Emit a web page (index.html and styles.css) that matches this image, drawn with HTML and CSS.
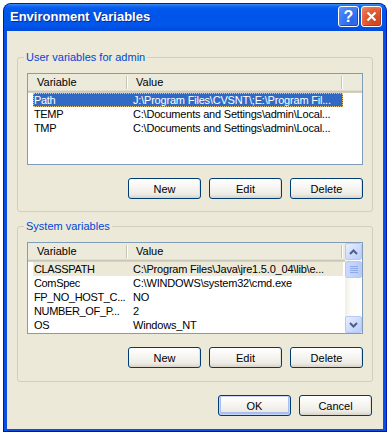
FILE: index.html
```html
<!DOCTYPE html>
<html lang="en">
<head>
    <meta charset="UTF-8">
    <title>Environment Variables</title>
    <link rel="stylesheet" href="styles.css">
</head>
<body>
<div class="window">
    <div class="titlebar">
        <span class="title">Environment Variables</span>
        <span class="tb-btn tb-help">?</span>
        <span class="tb-btn tb-close">
            <svg width="13" height="13" viewBox="0 0 13 13"><path d="M2.5 2.5 L10.5 10.5 M10.5 2.5 L2.5 10.5" stroke="#fff" stroke-width="2.2"/></svg>
        </span>
    </div>

    <div class="dialog">
        <fieldset class="group">
            <legend>User variables for admin</legend>
            <div class="list">
                <div class="list-main">
                    <div class="list-head">
                        <span class="hcol hcol-var"><span class="htext">Variable</span><i class="hdiv"></i></span>
                        <span class="hcol hcol-val"><span class="htext">Value</span><i class="hdiv"></i></span>
                    </div>
                    <div class="row row-selected"><span class="cell cell-var">Path</span><span class="cell cell-val">J:\Program Files\CVSNT\;E:\Program Fil...</span></div>
                    <div class="row"><span class="cell cell-var">TEMP</span><span class="cell cell-val">C:\Documents and Settings\admin\Local...</span></div>
                    <div class="row"><span class="cell cell-var">TMP</span><span class="cell cell-val">C:\Documents and Settings\admin\Local...</span></div>
                </div>
            </div>
            <div class="btn-row">
                <button class="btn">New</button>
                <button class="btn">Edit</button>
                <button class="btn">Delete</button>
            </div>
        </fieldset>

        <fieldset class="group group-system">
            <legend>System variables</legend>
            <div class="list">
                <div class="list-main">
                    <div class="list-head">
                        <span class="hcol hcol-var"><span class="htext">Variable</span><i class="hdiv"></i></span>
                        <span class="hcol hcol-val"><span class="htext">Value</span><i class="hdiv"></i></span>
                    </div>
                    <div class="row row-inactive"><span class="cell cell-var">CLASSPATH</span><span class="cell cell-val">C:\Program Files\Java\jre1.5.0_04\lib\e...</span></div>
                    <div class="row"><span class="cell cell-var">ComSpec</span><span class="cell cell-val">C:\WINDOWS\system32\cmd.exe</span></div>
                    <div class="row"><span class="cell cell-var">FP_NO_HOST_C...</span><span class="cell cell-val">NO</span></div>
                    <div class="row"><span class="cell cell-var">NUMBER_OF_P...</span><span class="cell cell-val">2</span></div>
                    <div class="row"><span class="cell cell-var">OS</span><span class="cell cell-val">Windows_NT</span></div>
                </div>
                <div class="scroll">
                    <span class="sb-btn">
                        <svg width="9" height="6" viewBox="0 0 9 6"><path d="M1 5 L4.5 1.5 L8 5" fill="none" stroke="#4d6185" stroke-width="2"/></svg>
                    </span>
                    <span class="sb-btn sb-thumb">
                        <svg width="8" height="7" viewBox="0 0 8 7"><path d="M0 0.5 H8 M0 2.5 H8 M0 4.5 H8 M0 6.5 H8" stroke="#8ea8e8" stroke-width="1"/></svg>
                    </span>
                    <span class="sb-track"></span>
                    <span class="sb-btn">
                        <svg width="9" height="6" viewBox="0 0 9 6"><path d="M1 1 L4.5 4.5 L8 1" fill="none" stroke="#4d6185" stroke-width="2"/></svg>
                    </span>
                </div>
            </div>
            <div class="btn-row">
                <button class="btn">New</button>
                <button class="btn">Edit</button>
                <button class="btn">Delete</button>
            </div>
        </fieldset>

        <div class="dialog-buttons">
            <button class="btn btn-default">OK</button>
            <button class="btn">Cancel</button>
        </div>
    </div>
</div>
</body>
</html>
```

FILE: styles.css
```css
* {
    box-sizing: border-box;
}

body {
    margin: 0;
    background: #fff;
    font-family: 'Liberation Sans', Arial, sans-serif;
    font-size: 11px;
    color: #000;
}

.window {
    margin: 3px 0 0 3px;
    width: 384px;
    height: 429px;
    display: flex;
    flex-direction: column;
    background: #0a4fe0;
    border: 1px solid #0019b0;
    border-bottom-color: #00138c;
    border-radius: 8px 8px 0 0;
}

.titlebar {
    height: 27px;
    flex: none;
    display: flex;
    align-items: center;
    padding: 0 4px 2px 6px;
    border-radius: 7px 7px 0 0;
    background: linear-gradient(to bottom, #3d8ff7 0, #1568ee 2px, #0058ee 5px, #0055e8 45%, #0256ea 80%, #0049dc 100%);
}

.title {
    flex: 1;
    color: #fff;
    font-weight: bold;
    font-size: 13px;
    text-shadow: 1px 1px 0 #0a2a8a;
}

.tb-btn {
    width: 21px;
    height: 21px;
    display: flex;
    align-items: center;
    justify-content: center;
    border: 1px solid #fff;
    border-radius: 3px;
    color: #fff;
    font-weight: bold;
    font-size: 16px;
}

.tb-help {
    margin-right: 2px;
    background: radial-gradient(circle at 70% 75%, #2a64e8 0, #3a78f2 50%, #5a94fb 100%);
    box-shadow: inset -1px -1px 0 #1a47c0;
}

.tb-close {
    background: radial-gradient(circle at 70% 75%, #cc4520 0, #e2592f 50%, #ef8a6a 100%);
    box-shadow: inset -1px -1px 0 #b03a18;
}

.dialog {
    flex: 1;
    margin: 0 3px 2px;
    background: #ece9d8;
    display: flex;
    flex-direction: column;
    padding: 20px 10px 0;
}

.group {
    margin: 0;
    min-width: 0;
    padding: 9px 9px 12px 9px;
    border: 1px solid #d0d0bf;
    border-radius: 3px;
}

.group-system {
    margin-top: 8px;
    padding-bottom: 13px;
}

legend {
    margin-left: -3px;
    padding: 0 2px;
    line-height: 13px;
    color: #0046d5;
}

.list {
    height: 92px;
    display: flex;
    background: #fff;
    border: 1px solid #7f9db9;
}

.list-main {
    flex: 1;
    min-width: 0;
}

.list-head {
    height: 19px;
    display: flex;
    background: #ebeadb;
    box-shadow: inset 0 -1px 0 #d6d2c2, inset 0 -2px 0 #cbc7b8, inset 0 -3px 0 #e2decd;
}

.hcol {
    display: flex;
    align-items: center;
    padding: 0 0 3px 9px;
}

.hcol-var {
    width: 99px;
}

.hcol-val {
    width: 215px;
}

.htext {
    flex: 1;
}

.hdiv {
    width: 1px;
    height: 13px;
    background: #c7c5b2;
    box-shadow: 1px 0 0 #fff;
}

.row {
    height: 14px;
    line-height: 14px;
    margin-left: 5px;
    width: 310px;
    display: flex;
    white-space: nowrap;
    letter-spacing: -0.2px;
}

.row:first-of-type {
    margin-top: 1px;
}

.cell-var {
    width: 94px;
    flex: none;
    padding-left: 1px;
    letter-spacing: -0.35px;
}

.cell-val {
    width: 216px;
    padding-left: 6px;
    overflow: hidden;
}

.row-selected {
    background: #316ac5;
    color: #fff;
    outline: 1px dotted #e3c27a;
    outline-offset: -1px;
}

.row-inactive {
    background: #ece9d8;
}

.scroll {
    width: 17px;
    flex: none;
    display: flex;
    flex-direction: column;
    background: linear-gradient(to right, #f1efe6, #fdfdfb 40%, #fefefe);
}

.sb-btn {
    height: 17px;
    flex: none;
    display: flex;
    align-items: center;
    justify-content: center;
    border: 1px solid #b7caf5;
    border-radius: 2px;
    background: linear-gradient(135deg, #e7effe 0, #cfdcfd 50%, #b9cdfb 100%);
}

.sb-thumb {
    margin-top: 1px;
    background: linear-gradient(to right, #cad8fd, #c2d3fc 50%, #b6cafa);
}

.sb-track {
    flex: 1;
}

.btn-row {
    display: flex;
    justify-content: flex-end;
    gap: 8px;
    margin-top: 13px;
}

.btn {
    width: 73px;
    height: 21px;
    padding: 0;
    font-family: 'Liberation Sans', Arial, sans-serif;
    font-size: 11px;
    color: #000;
    border: 1px solid #003c74;
    border-radius: 3px;
    background: linear-gradient(to bottom, #ffffff 0, #f6f5f1 45%, #ecebe5 80%, #d8d3c8 100%);
    box-shadow: inset -1px 0 0 #e3e0d6;
}

.btn-default {
    box-shadow: inset 0 0 0 1px #c8d7f6, inset 0 -1px 0 2px #a8bff0;
}

.dialog-buttons {
    display: flex;
    justify-content: flex-end;
    gap: 8px;
    margin-top: 13px;
    padding-right: 1px;
}
```
